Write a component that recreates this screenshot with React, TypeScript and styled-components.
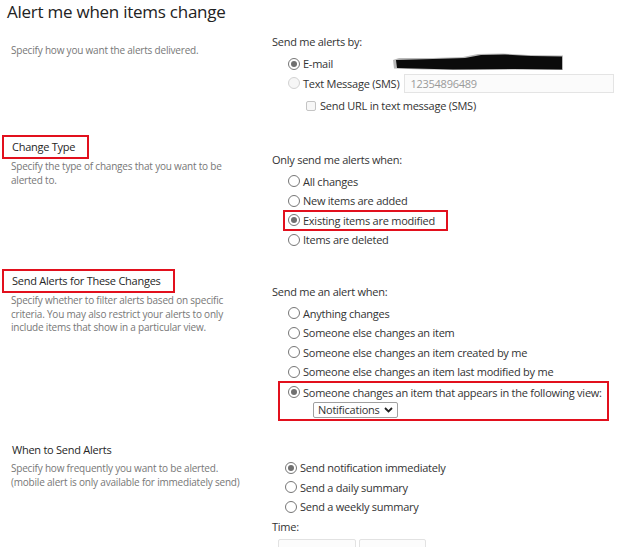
import React from 'react'
import styled, { createGlobalStyle } from 'styled-components'

const GlobalStyle = createGlobalStyle`
  body {
    margin: 0;
    background: #fff;
    font-family: 'Open Sans', 'Noto Sans', sans-serif;
    color: #333;
  }
`

const Page = styled.div`
  width: 618px;
  height: 547px;
  overflow: hidden;
`

const Title = styled.h1`
  margin: 0;
  padding-left: 7px;
  font-size: 17px;
  font-weight: 400;
  line-height: 24px;
  letter-spacing: -0.25px;
  color: #222;
`

const Section = styled.section<{ $top: number }>`
  display: grid;
  grid-template-columns: 260px 1fr;
  margin-top: ${p => p.$top}px;
  padding-left: 12px;
`

const Side = styled.div<{ $pad?: number }>`
  padding-top: ${p => p.$pad ?? 0}px;
`

const Main = styled.div<{ $pad?: number }>`
  padding-top: ${p => p.$pad ?? 0}px;
  min-width: 0;
`

const Heading = styled.div<{ $boxed?: boolean }>`
  width: fit-content;
  font-size: 11px;
  line-height: 18px;
  letter-spacing: -0.25px;
  color: #262626;
  white-space: nowrap;
  ${p => p.$boxed && `
    border: 2px solid #e2101d;
    padding: 1px 12px 1px 8px;
    margin-left: -10px;
  `}
`

const Desc = styled.p<{ $top?: number }>`
  margin: ${p => p.$top ?? 0}px 0 0 -1px;
  font-size: 10px;
  line-height: 13.5px;
  letter-spacing: -0.2px;
  color: #777;
  white-space: nowrap;
`

const FieldLabel = styled.div`
  font-size: 11px;
  line-height: 20px;
  letter-spacing: -0.25px;
  color: #333;
  margin-bottom: 2px;
`

const RadioRow = styled.div<{ $indent?: number; $h?: number }>`
  display: flex;
  align-items: center;
  height: ${p => p.$h ?? 19.5}px;
  padding-left: ${p => p.$indent ?? 0}px;
  font-size: 11px;
  letter-spacing: -0.25px;
  color: #333;
  white-space: nowrap;
`

const RadioDot = styled.span<{ $checked?: boolean; $disabled?: boolean }>`
  position: relative;
  flex-shrink: 0;
  box-sizing: border-box;
  width: 12px;
  height: 12px;
  margin-right: 3px;
  border-radius: 50%;
  border: 1px solid ${p => (p.$disabled ? '#d2d2d2' : '#767676')};
  background: ${p => (p.$disabled ? '#f6f6f6' : '#fff')};
  ${p => p.$checked && `
    &::after {
      content: '';
      position: absolute;
      inset: 2px;
      border-radius: 50%;
      background: #707070;
    }
  `}
`

const OptionText = styled.span<{ $w?: number }>`
  ${p => p.$w && `width: ${p.$w}px;`}
  flex-shrink: 0;
`

const Highlight = styled.div<{ $shift: number; $padL: number; $padR: number; $padB?: number }>`
  width: fit-content;
  border: 2px solid #e2101d;
  margin: -1px 0 -1px ${p => p.$shift}px;
  padding: 0 ${p => p.$padR}px ${p => p.$padB ?? 0}px ${p => p.$padL}px;
`

const PhoneInput = styled.div`
  flex: 1;
  box-sizing: border-box;
  height: 19px;
  margin: 0 4px 0 5px;
  padding-left: 5px;
  border: 1px solid #e4e4e4;
  background: #fbfbfb;
  color: #9a9a9a;
  line-height: 17px;
`

const CheckRow = styled.div`
  display: flex;
  align-items: center;
  height: 19.5px;
  margin-top: 3px;
  padding-left: 34px;
  font-size: 11px;
  letter-spacing: -0.25px;
  color: #333;
  white-space: nowrap;
`

const CheckBox = styled.span`
  box-sizing: border-box;
  width: 10px;
  height: 10px;
  margin-right: 4px;
  border: 1px solid #c4c4c4;
  border-radius: 2px;
  background: #f7f7f7;
`

const Scribble = styled.svg`
  align-self: flex-start;
  margin-top: -1px;
  flex-shrink: 0;
`

const SelectBox = styled.div`
  display: flex;
  align-items: center;
  gap: 4px;
  width: fit-content;
  box-sizing: border-box;
  height: 16px;
  margin: 0 0 0 25px;
  padding: 0 4px 0 4px;
  border: 1px solid #a0a0a0;
  border-radius: 2px;
  font-size: 11px;
  letter-spacing: -0.25px;
  color: #333;
  line-height: 14px;
`

const TimeRow = styled.div`
  display: flex;
  gap: 3px;
  padding-left: 6px;
`

const TimeBox = styled.div<{ $w: number }>`
  width: ${p => p.$w}px;
  height: 22px;
  box-sizing: border-box;
  border: 1px solid #e2e2e2;
  border-radius: 2px;
  background: #fcfcfc;
`

function Redaction() {
  return (
    <Scribble width="171" height="18" viewBox="0 0 171 18">
      <path d="M0 7 L6 5 L40 5 L70 4 L85 1 L110 0.5 L135 2 L170 2.5 L170 17 L130 16.5 L80 17 L30 16.5 L1 15.5 Z" fill="#8a8a8a" opacity="0.6" />
      <path d="M3 7 L40 6 L72 5 L88 2 L112 1.5 L138 3 L169 3.5 L169 16.5 L120 16 L60 16.5 L4 15 Z" fill="#0b0b0b" />
    </Scribble>
  )
}

function Chevron() {
  return (
    <svg width="9" height="6" viewBox="0 0 9 6">
      <path d="M1 1 L4.5 4.5 L8 1" fill="none" stroke="#222" strokeWidth="1.8" />
    </svg>
  )
}

type Option = { label: string; checked?: boolean }

function RadioList({ options, indent }: { options: Option[]; indent: number }) {
  return (
    <>
      {options.map(o => (
        <RadioRow key={o.label} $indent={indent}>
          <RadioDot $checked={o.checked} />
          <OptionText>{o.label}</OptionText>
        </RadioRow>
      ))}
    </>
  )
}

export default function App() {
  return (
    <>
      <GlobalStyle />
      <Page>
        <Title>Alert me when items change</Title>

        <Section $top={8}>
          <Side $pad={12}>
            <Desc>Specify how you want the alerts delivered.</Desc>
          </Side>
          <Main>
            <FieldLabel>Send me alerts by:</FieldLabel>
            <RadioRow $indent={16}>
              <RadioDot $checked />
              <OptionText $w={90}>E-mail</OptionText>
              <Redaction />
            </RadioRow>
            <RadioRow $indent={16}>
              <RadioDot $disabled />
              <OptionText>Text Message (SMS)</OptionText>
              <PhoneInput>12354896489</PhoneInput>
            </RadioRow>
            <CheckRow>
              <CheckBox />
              <span>Send URL in text message (SMS)</span>
            </CheckRow>
          </Main>
        </Section>

        <Section $top={19.5}>
          <Side>
            <Heading $boxed>Change Type</Heading>
            <Desc $top={1}>
              Specify the type of changes that you want to be
              <br />
              alerted to.
            </Desc>
          </Side>
          <Main $pad={14.5}>
            <FieldLabel>Only send me alerts when:</FieldLabel>
            <RadioList indent={16} options={[{ label: 'All changes' }, { label: 'New items are added' }]} />
            <Highlight $shift={11} $padL={3} $padR={11}>
              <RadioRow $h={17.5}>
                <RadioDot $checked />
                <OptionText>Existing items are modified</OptionText>
              </RadioRow>
            </Highlight>
            <RadioList indent={16} options={[{ label: 'Items are deleted' }]} />
          </Main>
        </Section>

        <Section $top={19.5}>
          <Side>
            <Heading $boxed>Send Alerts for These Changes</Heading>
            <Desc $top={1}>
              Specify whether to filter alerts based on specific
              <br />
              criteria. You may also restrict your alerts to only
              <br />
              include items that show in a particular view.
            </Desc>
          </Side>
          <Main $pad={12.5}>
            <FieldLabel>Send me an alert when:</FieldLabel>
            <RadioList
              indent={16}
              options={[
                { label: 'Anything changes' },
                { label: 'Someone else changes an item' },
                { label: 'Someone else changes an item created by me' },
                { label: 'Someone else changes an item last modified by me' },
              ]}
            />
            <Highlight $shift={6} $padL={8} $padR={5} $padB={1}>
              <RadioRow>
                <RadioDot $checked />
                <OptionText>Someone changes an item that appears in the following view:</OptionText>
              </RadioRow>
              <SelectBox>
                Notifications
                <Chevron />
              </SelectBox>
            </Highlight>
          </Main>
        </Section>

        <Section $top={21}>
          <Side>
            <Heading>When to Send Alerts</Heading>
            <Desc $top={3}>
              Specify how frequently you want to be alerted.
              <br />
              (mobile alert is only available for immediately send)
            </Desc>
          </Side>
          <Main $pad={17}>
            <RadioList
              indent={13}
              options={[
                { label: 'Send notification immediately', checked: true },
                { label: 'Send a daily summary' },
                { label: 'Send a weekly summary' },
              ]}
            />
            <FieldLabel>Time:</FieldLabel>
            <TimeRow>
              <TimeBox $w={78} />
              <TimeBox $w={67} />
            </TimeRow>
          </Main>
        </Section>
      </Page>
    </>
  )
}
